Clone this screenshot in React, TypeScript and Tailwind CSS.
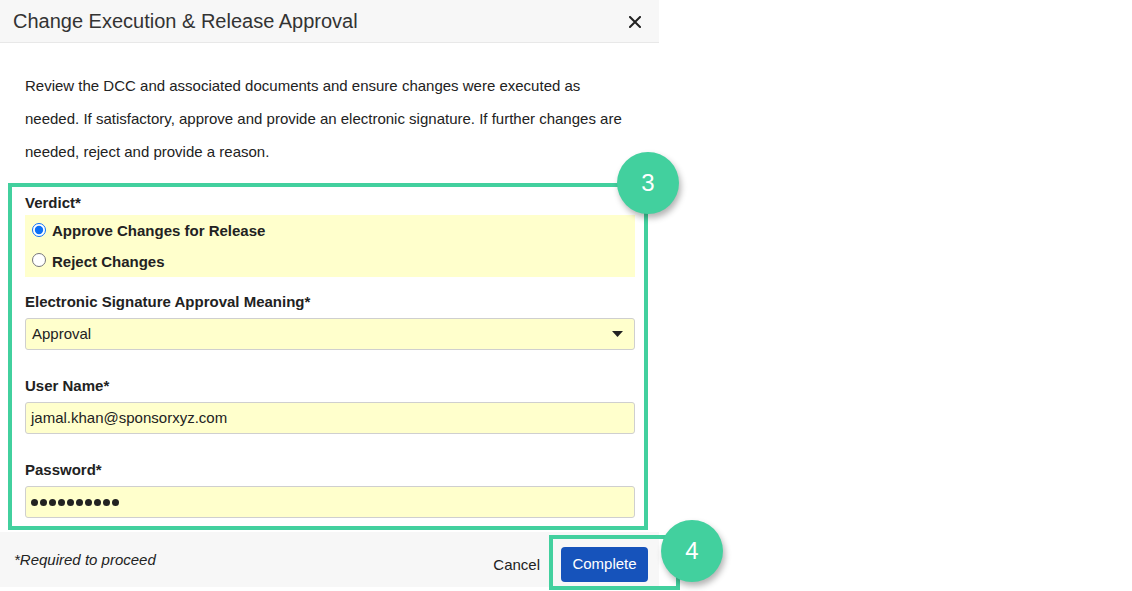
import React from "react";

export default function App() {
  return (
    <div className="w-[1132px] h-[591px] bg-white font-['Liberation_Sans',Arial,sans-serif] text-[#222]">
      <div className="w-[659px]">
        {/* Header */}
        <div className="h-[43px] bg-[#f7f7f7] border-b border-[#e8e8e8] flex items-center justify-between pl-[13px] pr-[18px]">
          <div className="text-[20px] text-[#333] leading-none">Change Execution &amp; Release Approval</div>
          <svg width="12" height="12" viewBox="0 0 12 12" className="mt-[1px]">
            <path d="M1 1 L11 11 M11 1 L1 11" stroke="#222" strokeWidth="2" strokeLinecap="square" />
          </svg>
        </div>

        {/* Body */}
        <div className="pt-[26px]">
          <p className="pl-[25px] pr-[24px] text-[15px] leading-[33px] text-[#222]">
            Review the DCC and associated documents and ensure changes were executed as
            <br />
            needed. If satisfactory, approve and provide an electronic signature. If further changes are
            <br />
            needed, reject and provide a reason.
          </p>

          <div className="relative mt-[15px] ml-[8px] w-[640px] border-4 border-[#42d09e] pl-[13px] pr-[9px] pt-[6px] pb-[8px]">
            <div className="absolute -top-[35px] -right-[35px] w-[62px] h-[62px] rounded-full bg-[#42d09e] shadow-[2px_4px_6px_rgba(0,0,0,0.3)] flex items-center justify-center text-white text-[24px]">
              3
            </div>

            <div className="text-[15px] font-bold leading-[20px] mb-[2px]">Verdict*</div>
            <div className="bg-[#ffffcc] h-[62px] flex flex-col pl-[7px] pt-[1px]">
              <label className="h-[31px] flex items-center gap-[6px] text-[15px] font-bold">
                <input type="radio" name="verdict" defaultChecked className="w-[14px] h-[14px] m-0 accent-[#0b6ff5] -mt-[3px]" />
                Approve Changes for Release
              </label>
              <label className="h-[31px] flex items-center gap-[6px] text-[15px] font-bold">
                <input type="radio" name="verdict" className="w-[14px] h-[14px] m-0 -mt-[3px]" />
                Reject Changes
              </label>
            </div>

            <div className="mt-[15px] text-[15px] font-bold leading-[20px] mb-[6px]">Electronic Signature Approval Meaning*</div>
            <div className="h-[32px] bg-[#ffffcc] border border-[#cfcfcf] rounded-[3px] flex items-center justify-between pl-[6px] pr-[11px] text-[15px]">
              <span>Approval</span>
              <svg width="11" height="6" viewBox="0 0 11 6">
                <path d="M0 0 L11 0 L5.5 6 Z" fill="#222" />
              </svg>
            </div>

            <div className="mt-[26px] text-[15px] font-bold leading-[20px] mb-[6px]">User Name*</div>
            <div className="h-[32px] bg-[#ffffcc] border border-[#cfcfcf] rounded-[3px] flex items-center pl-[5px] text-[15px]">
              jamal.khan@sponsorxyz.com
            </div>

            <div className="mt-[26px] text-[15px] font-bold leading-[20px] mb-[6px]">Password*</div>
            <div className="h-[32px] bg-[#ffffcc] border border-[#cfcfcf] rounded-[3px] flex items-center gap-[2px] pl-[5px]">
              {Array.from({ length: 10 }).map((_, i) => (
                <span key={i} className="w-[7px] h-[7px] rounded-full bg-[#222]" />
              ))}
            </div>
          </div>
        </div>

        {/* Footer */}
        <div className="mt-[2px] h-[55px] bg-[#f7f7f7] flex items-start justify-between pl-[14px] pr-[11px] pt-[15px]">
          <span className="text-[15px] leading-[20px] italic text-[#222] mt-[3px]">*Required to proceed</span>
          <div className="flex items-center gap-[21px]">
            <span className="text-[15px] leading-[20px] text-[#222] mt-[1px]">Cancel</span>
            <div className="relative">
              <button className="w-[87px] h-[35px] rounded-[4px] bg-[#1653bb] text-white text-[15px] flex items-center justify-center">
                Complete
              </button>
              <div className="absolute -top-[12px] -left-[12px] -right-[32px] -bottom-[8px] border-4 border-[#42d09e] pointer-events-none" />
              <div className="absolute -top-[27px] left-[100px] w-[62px] h-[62px] rounded-full bg-[#42d09e] shadow-[2px_4px_6px_rgba(0,0,0,0.3)] flex items-center justify-center text-white text-[24px]">
                4
              </div>
            </div>
          </div>
        </div>
      </div>
    </div>
  );
}
